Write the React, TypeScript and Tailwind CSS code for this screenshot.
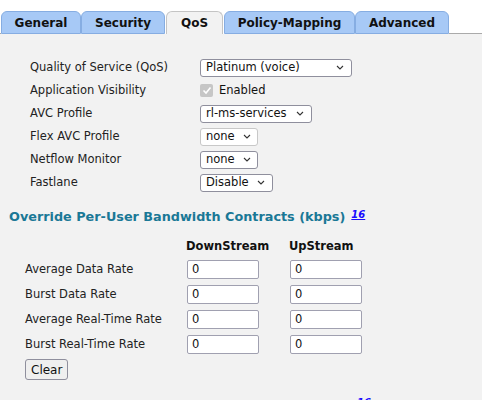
import React from "react";

const tabs = [
  { name: "General", w: "w-[80px]" },
  { name: "Security", w: "w-[84px]" },
  { name: "QoS", w: "w-[57px]" },
  { name: "Policy-Mapping", w: "w-[131px]" },
  { name: "Advanced", w: "w-[94px]" },
];

function Chevron() {
  return (
    <svg width="8" height="5" viewBox="0 0 8 5" className="ml-auto shrink-0">
      <path d="M1 1 L4 4 L7 1" fill="none" stroke="#333" strokeWidth="1.1" />
    </svg>
  );
}

function Select({ value, width, disabled }: { value: string; width: string; disabled?: boolean }) {
  return (
    <div
      className={`flex items-center h-[18px] bg-white rounded-[3px] border px-[5px] pr-[7px] ${width} ${
        disabled ? "border-[#c8c8c8]" : "border-[#8f8f9d]"
      }`}
    >
      <span className="text-[#111] mr-2">{value}</span>
      <Chevron />
    </div>
  );
}

export default function App() {
  const formRows: { label: string; control: React.ReactNode }[] = [
    { label: "Quality of Service (QoS)", control: <Select value="Platinum (voice)" width="w-[152px]" /> },
    {
      label: "Application Visibility",
      control: (
        <div className="flex items-center gap-[6px]">
          <div className="w-[13px] h-[13px] rounded-[2px] bg-[#c6c6c6] flex items-center justify-center">
            <svg width="10" height="9" viewBox="0 0 10 9">
              <path d="M1.5 4.5 L4 7 L8.5 1.5" fill="none" stroke="#fff" strokeWidth="1.6" />
            </svg>
          </div>
          <span className="text-[#111]">Enabled</span>
        </div>
      ),
    },
    { label: "AVC Profile", control: <Select value="rl-ms-services" width="w-[112px]" /> },
    { label: "Flex AVC Profile", control: <Select value="none" width="w-[58px]" disabled /> },
    { label: "Netflow Monitor", control: <Select value="none" width="w-[58px]" /> },
    { label: "Fastlane", control: <Select value="Disable" width="w-[73px]" /> },
  ];

  const rates = ["Average Data Rate", "Burst Data Rate", "Average Real-Time Rate", "Burst Real-Time Rate"];

  return (
    <div className="w-[482px] h-[400px] overflow-hidden bg-[#f2f2f2] text-[11.5px] text-[#222]" style={{ fontFamily: '"DejaVu Sans", Tahoma, sans-serif' }}>
      {/* Tabs */}
      <div className="bg-white pt-[11px] flex items-end">
        <div className="w-px h-[23px] border-b border-[#aaa]" />
        {tabs.map((t) =>
          t.name === "QoS" ? (
            <div
              key={t.name}
              className={`${t.w} h-[23px] mx-px flex items-center justify-center text-[12px] font-bold text-[#111] bg-[#f2f2f2] border border-b-0 border-[#c4c4c4] rounded-t-[6px]`}
            >
              {t.name}
            </div>
          ) : (
            <div
              key={t.name}
              className={`${t.w} h-[23px] flex items-center justify-center text-[12px] font-bold text-[#111] bg-[#a7c9f6] border border-[#86ade2] rounded-t-[6px]`}
            >
              {t.name}
            </div>
          )
        )}
        <div className="flex-1 h-[23px] border-b border-[#aaa]" />
      </div>

      {/* QoS form */}
      <div className="pt-[22px] pl-[30px] flex flex-col">
        {formRows.map((r) => (
          <div key={r.label} className="flex items-center h-[23px]">
            <div className="w-[170px] text-[#222]">{r.label}</div>
            {r.control}
          </div>
        ))}
      </div>

      {/* Bandwidth contracts */}
      <div className="pl-[9px] pt-[13px] flex items-start">
        <span className="text-[12.8px] font-bold text-[#1a7896]">Override Per-User Bandwidth Contracts (kbps)</span>
        <a className="ml-[6px] mt-[0px] text-[10px] font-bold italic underline text-[#1a0dff]">16</a>
      </div>

      <div className="pl-[25px] pt-[9px] flex flex-col">
        <div className="flex h-[22px] items-center font-bold text-[#111]">
          <div className="w-[161px]" />
          <div className="w-[103px]">DownStream</div>
          <div>UpStream</div>
        </div>
        {rates.map((r) => (
          <div key={r} className="flex items-center h-[25px]">
            <div className="w-[162px]">{r}</div>
            <div className="w-[72px] h-[19px] bg-white border border-[#a0a0b0] rounded-[2px] px-[4px] flex items-center text-[#111]">0</div>
            <div className="w-[31px]" />
            <div className="w-[72px] h-[19px] bg-white border border-[#a0a0b0] rounded-[2px] px-[4px] flex items-center text-[#111]">0</div>
          </div>
        ))}
        <div className="pt-[2px]">
          <button className="h-[21px] px-[5px] bg-[#efefef] border border-[#8f8f9d] rounded-[3px] text-[12px] text-[#111]" style={{ fontFamily: '"DejaVu Sans", sans-serif' }}>
            Clear
          </button>
        </div>
        <div className="pl-[332px] pt-[14px]">
          <a className="text-[10px] font-bold italic underline text-[#1a0dff]">16</a>
        </div>
      </div>
    </div>
  );
}
